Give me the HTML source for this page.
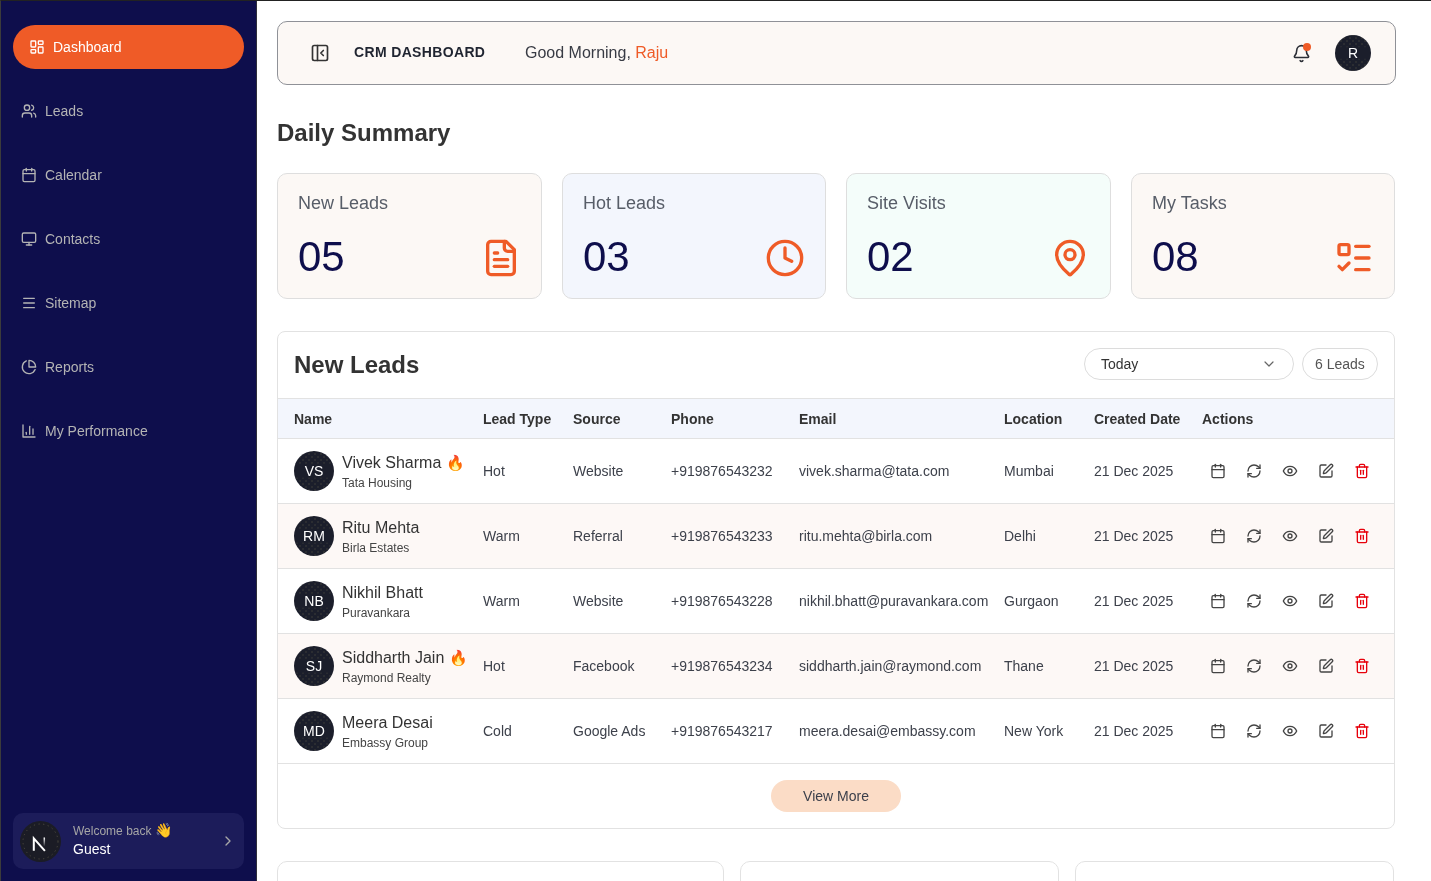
<!DOCTYPE html>
<html><head><meta charset="utf-8">
<style>
*{box-sizing:border-box;margin:0;padding:0}
html,body{width:1431px;height:881px;overflow:hidden;background:#fff}
body{font-family:"Liberation Sans",sans-serif;-webkit-font-smoothing:antialiased;position:relative;border-top:1px solid #222;border-left:1px solid #3b3b3b}
svg.i{fill:none;stroke:currentColor;stroke-width:2;stroke-linecap:round;stroke-linejoin:round;display:block}
.abs{position:absolute}
#side{position:absolute;will-change:transform;left:0;top:0;width:256px;height:880px;background:#0e0e4c;border-right:1px solid #2e2e3a}
.pill{position:absolute;left:12px;top:24px;width:231px;height:44px;border-radius:22px;background:#ef5b27;color:#fff}
.pill svg{position:absolute;left:16px;top:14px}
.pill span{position:absolute;left:40px;top:14px;font-size:14px;line-height:16px}
.nav{position:absolute;left:20px;color:#b4b4b4;font-size:14px;line-height:16px}
.nav svg{position:absolute;left:0;top:0}
.nav span{position:absolute;left:24px;top:0;white-space:nowrap}
#main{position:absolute;will-change:transform;left:255px;top:0;width:1174px;height:880px}
#hdr{position:absolute;left:21px;top:20px;width:1119px;height:64px;border:1px solid #8f9197;border-radius:10px;background:#fcf8f5}
.av{position:absolute;border-radius:50%;background-color:#1b1e2b;background-image:linear-gradient(to bottom,rgba(27,30,43,0) 30%,#1b1e2b 36%,#1b1e2b 64%,rgba(27,30,43,0) 70%),radial-gradient(circle,rgba(150,140,95,.28) 0 0.5px,rgba(0,0,0,0) 0.9px),radial-gradient(circle,rgba(150,140,95,.28) 0 0.5px,rgba(0,0,0,0) 0.9px);background-size:100% 100%,6px 6px,6px 6px;background-position:0 0,0 0,3px 3px;color:#fff;display:flex;align-items:center;justify-content:center}
.card{position:absolute;top:172px;height:126px;border:1px solid #dedede;border-radius:10px}
.lbl{position:absolute;left:20px;top:19px;font-size:18px;line-height:20px;color:#575d68}
.num{position:absolute;left:20px;top:60px;font-size:42px;line-height:46px;color:#0e0e4c}
.ci{position:absolute;right:20px;top:64px;color:#ef5b27}
#tbl{position:absolute;left:21px;top:330px;width:1118px;height:498px;border:1px solid #e2e2e2;border-radius:8px;background:#fff;overflow:hidden}
.bc{position:absolute;top:860px;height:40px;border:1px solid #e2e2e2;border-radius:10px}
.dd{position:absolute;height:32px;border:1px solid #dcdcdc;border-radius:16px;background:#fff}
.dd span{position:absolute;top:7px;font-size:14px;line-height:16px;color:#333;white-space:nowrap}
.th{position:absolute;left:0;width:100%;height:41px;background:#f3f6fd;border-top:1px solid #e2e2e2;border-bottom:1px solid #e2e2e2}
.hc{position:absolute;font-size:14px;line-height:16px;font-weight:bold;color:#333;white-space:nowrap}
.tr{position:absolute;left:0;width:100%;height:65px;border-bottom:1px solid #e2e2e2}
.av.sm{width:40px;height:40px;font-size:14px}
.nm{position:absolute;font-size:16px;line-height:20px;color:#333;white-space:nowrap}
.emo{font-size:15px}
.co{position:absolute;font-size:12px;line-height:14px;color:#444;white-space:nowrap}
.td{position:absolute;font-size:14px;line-height:18px;color:#3d414b;white-space:nowrap}
.vm{position:absolute;width:130px;height:32px;border-radius:16px;background:#fbdcc6;color:#3b3f4a;font-size:14px;line-height:32px;text-align:center}
#uc{position:absolute;left:12px;top:812px;width:231px;height:56px;border-radius:10px;background:#1c1c5a}
</style></head><body>
<div id="side">
  <div class="pill">
    <svg class="i" width="16" height="16" viewBox="0 0 24 24"><rect width="7" height="9" x="3" y="3" rx="1"/><rect width="7" height="5" x="14" y="3" rx="1"/><rect width="7" height="9" x="14" y="12" rx="1"/><rect width="7" height="5" x="3" y="16" rx="1"/></svg>
    <span>Dashboard</span>
  </div>
  <div class="nav" style="top:102px"><svg class="i" width="16" height="16" viewBox="0 0 24 24"><path d="M16 21v-2a4 4 0 0 0-4-4H6a4 4 0 0 0-4 4v2"/><circle cx="9" cy="7" r="4"/><path d="M22 21v-2a4 4 0 0 0-3-3.87"/><path d="M16 3.13a4 4 0 0 1 0 7.75"/></svg><span>Leads</span></div>
  <div class="nav" style="top:166px"><svg class="i" width="16" height="16" viewBox="0 0 24 24"><path d="M8 2v4"/><path d="M16 2v4"/><rect width="18" height="18" x="3" y="4" rx="2"/><path d="M3 10h18"/></svg><span>Calendar</span></div>
  <div class="nav" style="top:230px"><svg class="i" width="16" height="16" viewBox="0 0 24 24"><rect width="20" height="14" x="2" y="3" rx="2"/><line x1="8" x2="16" y1="21" y2="21"/><line x1="12" x2="12" y1="17" y2="21"/></svg><span>Contacts</span></div>
  <div class="nav" style="top:294px"><svg class="i" width="16" height="16" viewBox="0 0 24 24"><path d="M4 5h16"/><path d="M4 12h16"/><path d="M4 19h16"/></svg><span>Sitemap</span></div>
  <div class="nav" style="top:358px"><svg class="i" width="16" height="16" viewBox="0 0 24 24"><path d="M21.21 15.89A10 10 0 1 1 8 2.83"/><path d="M22 12A10 10 0 0 0 12 2v10z"/></svg><span>Reports</span></div>
  <div class="nav" style="top:422px"><svg class="i" width="16" height="16" viewBox="0 0 24 24"><path d="M3 3v18h18"/><path d="M18 17V9"/><path d="M13 17V5"/><path d="M8 17v-3"/></svg><span>My Performance</span></div>
  <div id="uc">
    <svg style="position:absolute;left:7px;top:8px" width="41" height="41" viewBox="0 0 41 41"><defs><linearGradient id="ng" gradientUnits="userSpaceOnUse" x1="0" y1="16.5" x2="0" y2="25.5"><stop offset="0" stop-color="#fff"/><stop offset="1" stop-color="#fff" stop-opacity="0"/></linearGradient></defs><circle cx="20.5" cy="20.5" r="20.5" fill="#1b1c25"/><circle cx="20.5" cy="20.5" r="17.5" fill="none" stroke="#6b6650" stroke-width="0.6" stroke-dasharray="1.2 3.5"/><path d="M13.8 29.8V17.4L24.9 29.8" stroke="#fff" stroke-width="2" fill="none" stroke-linejoin="miter"/><path d="M24.3 16.5V25.5" stroke="url(#ng)" stroke-width="1.5"/></svg>
    <div class="abs" style="left:60px;top:10px;font-size:12px;line-height:14px;color:#a6a6a6;white-space:nowrap">Welcome back <span style="font-size:14px;line-height:14px">👋</span></div>
    <div class="abs" style="left:60px;top:28px;font-size:14px;line-height:17px;color:#fff">Guest</div>
    <svg class="i" style="position:absolute;left:207px;top:20px;color:#a8a8a8" width="16" height="16" viewBox="0 0 24 24"><path d="m9 18 6-6-6-6"/></svg>
  </div>
</div>
<div id="main">
  <div id="hdr">
    <svg class="i" style="position:absolute;left:32px;top:20.5px;color:#333" width="20" height="20" viewBox="0 0 24 24"><rect width="18" height="18" x="3" y="3" rx="2"/><path d="M9 3v18"/><path d="m16 15-3-3 3-3"/></svg>
    <div class="abs" style="left:76px;top:22px;font-size:14px;line-height:16px;font-weight:bold;letter-spacing:0.35px;color:#1f2430">CRM DASHBOARD</div>
    <div class="abs" style="left:247px;top:21px;font-size:16px;line-height:20px;color:#383b44">Good Morning, <span style="color:#ef5b27">Raju</span></div>
    <svg class="i" style="position:absolute;left:1013.5px;top:21.8px;color:#2b2e36" width="19" height="19" viewBox="0 0 24 24"><path d="M10.268 21a2 2 0 0 0 3.464 0"/><path d="M3.262 15.326A1 1 0 0 0 4 17h16a1 1 0 0 0 .74-1.673C19.41 13.956 18 12.499 18 8A6 6 0 0 0 6 8c0 4.499-1.411 5.956-2.738 7.326"/></svg>
    <div class="abs" style="left:1025px;top:21px;width:8px;height:8px;border-radius:50%;background:#ef5b27"></div>
    <div class="av" style="left:1057px;top:13px;width:36px;height:36px;font-size:14px">R</div>
  </div>
  <div class="abs" style="left:21px;top:118px;font-size:24px;line-height:28px;font-weight:bold;color:#333">Daily Summary</div>
  <div class="card" style="left:21px;width:265px;background:#fcf8f5">
    <div class="lbl">New Leads</div><div class="num">05</div>
    <svg class="i ci" width="40" height="40" viewBox="0 0 24 24"><path d="M15 2H6a2 2 0 0 0-2 2v16a2 2 0 0 0 2 2h12a2 2 0 0 0 2-2V7Z"/><path d="M14 2v4a2 2 0 0 0 2 2h4"/><path d="M10 9H8"/><path d="M16 13H8"/><path d="M16 17H8"/></svg>
  </div>
  <div class="card" style="left:306px;width:264px;background:#f3f6fd">
    <div class="lbl">Hot Leads</div><div class="num">03</div>
    <svg class="i ci" width="40" height="40" viewBox="0 0 24 24"><circle cx="12" cy="12" r="10"/><polyline points="12 6 12 12 16 14"/></svg>
  </div>
  <div class="card" style="left:590px;width:265px;background:#f4fdfa">
    <div class="lbl">Site Visits</div><div class="num">02</div>
    <svg class="i ci" width="40" height="40" viewBox="0 0 24 24"><path d="M20 10c0 4.993-5.539 10.193-7.399 11.799a1 1 0 0 1-1.202 0C9.539 20.193 4 14.993 4 10a8 8 0 0 1 16 0"/><circle cx="12" cy="10" r="3"/></svg>
  </div>
  <div class="card" style="left:875px;width:264px;background:#fcf8f5">
    <div class="lbl">My Tasks</div><div class="num">08</div>
    <svg class="i ci" width="40" height="40" viewBox="0 0 24 24"><rect x="3" y="4" width="6" height="6" rx="1"/><path d="m3 17 2 2 4-4"/><path d="M13 5h8"/><path d="M13 12h8"/><path d="M13 19h8"/></svg>
  </div>
  <div id="tbl">
<div class="abs" style="left:16px;top:19px;font-size:24px;line-height:28px;font-weight:bold;color:#333">New Leads</div>
<div class="dd" style="left:806px;top:16px;width:210px"><span style="left:16px">Today</span><svg class="i" style="position:absolute;left:176px;top:7px;color:#666;stroke-width:1.8" width="16" height="16" viewBox="0 0 24 24"><path d="m6 9 6 6 6-6"/></svg></div>
<div class="dd" style="left:1024px;top:16px;width:76px"><span style="left:12px;color:#555">6 Leads</span></div>
<div class="th" style="top:66px"></div>
<div class="hc" style="left:16px;top:79px">Name</div>
<div class="hc" style="left:205px;top:79px">Lead Type</div>
<div class="hc" style="left:295px;top:79px">Source</div>
<div class="hc" style="left:393px;top:79px">Phone</div>
<div class="hc" style="left:521px;top:79px">Email</div>
<div class="hc" style="left:726px;top:79px">Location</div>
<div class="hc" style="left:816px;top:79px">Created Date</div>
<div class="hc" style="left:924px;top:79px">Actions</div>
<div class="tr" style="top:107px;background:#fff"></div>
<div class="av sm" style="left:16px;top:119px">VS</div>
<div class="nm" style="left:64px;top:121px">Vivek Sharma <span class="emo">🔥</span></div>
<div class="co" style="left:64px;top:144px">Tata Housing</div>
<div class="td" style="left:205px;top:130px">Hot</div>
<div class="td" style="left:295px;top:130px">Website</div>
<div class="td" style="left:393px;top:130px">+919876543232</div>
<div class="td" style="left:521px;top:130px">vivek.sharma@tata.com</div>
<div class="td" style="left:726px;top:130px">Mumbai</div>
<div class="td" style="left:816px;top:130px">21 Dec 2025</div>
<svg class="i" style="position:absolute;left:932px;top:131px;color:#444" width="16" height="16" viewBox="0 0 24 24"><path d="M8 2v4"/><path d="M16 2v4"/><rect width="18" height="18" x="3" y="4" rx="2"/><path d="M3 10h18"/></svg>
<svg class="i" style="position:absolute;left:968px;top:131px;color:#444" width="16" height="16" viewBox="0 0 24 24"><path d="M3 12a9 9 0 0 1 9-9 9.75 9.75 0 0 1 6.74 2.74L21 8"/><path d="M21 3v5h-5"/><path d="M21 12a9 9 0 0 1-9 9 9.75 9.75 0 0 1-6.74-2.74L3 16"/><path d="M8 16H3v5"/></svg>
<svg class="i" style="position:absolute;left:1004px;top:131px;color:#444" width="16" height="16" viewBox="0 0 24 24"><path d="M2 12s3-7 10-7 10 7 10 7-3 7-10 7-10-7-10-7Z"/><circle cx="12" cy="12" r="3"/></svg>
<svg class="i" style="position:absolute;left:1040px;top:131px;color:#444" width="16" height="16" viewBox="0 0 24 24"><path d="M12 3H5a2 2 0 0 0-2 2v14a2 2 0 0 0 2 2h14a2 2 0 0 0 2-2v-7"/><path d="M18.375 2.625a1 1 0 0 1 3 3l-9.013 9.014a2 2 0 0 1-.853.505l-2.873.84a.5.5 0 0 1-.62-.62l.84-2.873a2 2 0 0 1 .506-.852z"/></svg>
<svg class="i" style="position:absolute;left:1076px;top:131px;color:#e7000b" width="16" height="16" viewBox="0 0 24 24"><path d="M3 6h18"/><path d="M19 6v14c0 1-1 2-2 2H7c-1 0-2-1-2-2V6"/><path d="M8 6V4c0-1 1-2 2-2h4c1 0 2 1 2 2v2"/><line x1="10" x2="10" y1="11" y2="17"/><line x1="14" x2="14" y1="11" y2="17"/></svg>
<div class="tr" style="top:172px;background:#fdf8f6"></div>
<div class="av sm" style="left:16px;top:184px">RM</div>
<div class="nm" style="left:64px;top:186px">Ritu Mehta</div>
<div class="co" style="left:64px;top:209px">Birla Estates</div>
<div class="td" style="left:205px;top:195px">Warm</div>
<div class="td" style="left:295px;top:195px">Referral</div>
<div class="td" style="left:393px;top:195px">+919876543233</div>
<div class="td" style="left:521px;top:195px">ritu.mehta@birla.com</div>
<div class="td" style="left:726px;top:195px">Delhi</div>
<div class="td" style="left:816px;top:195px">21 Dec 2025</div>
<svg class="i" style="position:absolute;left:932px;top:196px;color:#444" width="16" height="16" viewBox="0 0 24 24"><path d="M8 2v4"/><path d="M16 2v4"/><rect width="18" height="18" x="3" y="4" rx="2"/><path d="M3 10h18"/></svg>
<svg class="i" style="position:absolute;left:968px;top:196px;color:#444" width="16" height="16" viewBox="0 0 24 24"><path d="M3 12a9 9 0 0 1 9-9 9.75 9.75 0 0 1 6.74 2.74L21 8"/><path d="M21 3v5h-5"/><path d="M21 12a9 9 0 0 1-9 9 9.75 9.75 0 0 1-6.74-2.74L3 16"/><path d="M8 16H3v5"/></svg>
<svg class="i" style="position:absolute;left:1004px;top:196px;color:#444" width="16" height="16" viewBox="0 0 24 24"><path d="M2 12s3-7 10-7 10 7 10 7-3 7-10 7-10-7-10-7Z"/><circle cx="12" cy="12" r="3"/></svg>
<svg class="i" style="position:absolute;left:1040px;top:196px;color:#444" width="16" height="16" viewBox="0 0 24 24"><path d="M12 3H5a2 2 0 0 0-2 2v14a2 2 0 0 0 2 2h14a2 2 0 0 0 2-2v-7"/><path d="M18.375 2.625a1 1 0 0 1 3 3l-9.013 9.014a2 2 0 0 1-.853.505l-2.873.84a.5.5 0 0 1-.62-.62l.84-2.873a2 2 0 0 1 .506-.852z"/></svg>
<svg class="i" style="position:absolute;left:1076px;top:196px;color:#e7000b" width="16" height="16" viewBox="0 0 24 24"><path d="M3 6h18"/><path d="M19 6v14c0 1-1 2-2 2H7c-1 0-2-1-2-2V6"/><path d="M8 6V4c0-1 1-2 2-2h4c1 0 2 1 2 2v2"/><line x1="10" x2="10" y1="11" y2="17"/><line x1="14" x2="14" y1="11" y2="17"/></svg>
<div class="tr" style="top:237px;background:#fff"></div>
<div class="av sm" style="left:16px;top:249px">NB</div>
<div class="nm" style="left:64px;top:251px">Nikhil Bhatt</div>
<div class="co" style="left:64px;top:274px">Puravankara</div>
<div class="td" style="left:205px;top:260px">Warm</div>
<div class="td" style="left:295px;top:260px">Website</div>
<div class="td" style="left:393px;top:260px">+919876543228</div>
<div class="td" style="left:521px;top:260px">nikhil.bhatt@puravankara.com</div>
<div class="td" style="left:726px;top:260px">Gurgaon</div>
<div class="td" style="left:816px;top:260px">21 Dec 2025</div>
<svg class="i" style="position:absolute;left:932px;top:261px;color:#444" width="16" height="16" viewBox="0 0 24 24"><path d="M8 2v4"/><path d="M16 2v4"/><rect width="18" height="18" x="3" y="4" rx="2"/><path d="M3 10h18"/></svg>
<svg class="i" style="position:absolute;left:968px;top:261px;color:#444" width="16" height="16" viewBox="0 0 24 24"><path d="M3 12a9 9 0 0 1 9-9 9.75 9.75 0 0 1 6.74 2.74L21 8"/><path d="M21 3v5h-5"/><path d="M21 12a9 9 0 0 1-9 9 9.75 9.75 0 0 1-6.74-2.74L3 16"/><path d="M8 16H3v5"/></svg>
<svg class="i" style="position:absolute;left:1004px;top:261px;color:#444" width="16" height="16" viewBox="0 0 24 24"><path d="M2 12s3-7 10-7 10 7 10 7-3 7-10 7-10-7-10-7Z"/><circle cx="12" cy="12" r="3"/></svg>
<svg class="i" style="position:absolute;left:1040px;top:261px;color:#444" width="16" height="16" viewBox="0 0 24 24"><path d="M12 3H5a2 2 0 0 0-2 2v14a2 2 0 0 0 2 2h14a2 2 0 0 0 2-2v-7"/><path d="M18.375 2.625a1 1 0 0 1 3 3l-9.013 9.014a2 2 0 0 1-.853.505l-2.873.84a.5.5 0 0 1-.62-.62l.84-2.873a2 2 0 0 1 .506-.852z"/></svg>
<svg class="i" style="position:absolute;left:1076px;top:261px;color:#e7000b" width="16" height="16" viewBox="0 0 24 24"><path d="M3 6h18"/><path d="M19 6v14c0 1-1 2-2 2H7c-1 0-2-1-2-2V6"/><path d="M8 6V4c0-1 1-2 2-2h4c1 0 2 1 2 2v2"/><line x1="10" x2="10" y1="11" y2="17"/><line x1="14" x2="14" y1="11" y2="17"/></svg>
<div class="tr" style="top:302px;background:#fdf8f6"></div>
<div class="av sm" style="left:16px;top:314px">SJ</div>
<div class="nm" style="left:64px;top:316px">Siddharth Jain <span class="emo">🔥</span></div>
<div class="co" style="left:64px;top:339px">Raymond Realty</div>
<div class="td" style="left:205px;top:325px">Hot</div>
<div class="td" style="left:295px;top:325px">Facebook</div>
<div class="td" style="left:393px;top:325px">+919876543234</div>
<div class="td" style="left:521px;top:325px">siddharth.jain@raymond.com</div>
<div class="td" style="left:726px;top:325px">Thane</div>
<div class="td" style="left:816px;top:325px">21 Dec 2025</div>
<svg class="i" style="position:absolute;left:932px;top:326px;color:#444" width="16" height="16" viewBox="0 0 24 24"><path d="M8 2v4"/><path d="M16 2v4"/><rect width="18" height="18" x="3" y="4" rx="2"/><path d="M3 10h18"/></svg>
<svg class="i" style="position:absolute;left:968px;top:326px;color:#444" width="16" height="16" viewBox="0 0 24 24"><path d="M3 12a9 9 0 0 1 9-9 9.75 9.75 0 0 1 6.74 2.74L21 8"/><path d="M21 3v5h-5"/><path d="M21 12a9 9 0 0 1-9 9 9.75 9.75 0 0 1-6.74-2.74L3 16"/><path d="M8 16H3v5"/></svg>
<svg class="i" style="position:absolute;left:1004px;top:326px;color:#444" width="16" height="16" viewBox="0 0 24 24"><path d="M2 12s3-7 10-7 10 7 10 7-3 7-10 7-10-7-10-7Z"/><circle cx="12" cy="12" r="3"/></svg>
<svg class="i" style="position:absolute;left:1040px;top:326px;color:#444" width="16" height="16" viewBox="0 0 24 24"><path d="M12 3H5a2 2 0 0 0-2 2v14a2 2 0 0 0 2 2h14a2 2 0 0 0 2-2v-7"/><path d="M18.375 2.625a1 1 0 0 1 3 3l-9.013 9.014a2 2 0 0 1-.853.505l-2.873.84a.5.5 0 0 1-.62-.62l.84-2.873a2 2 0 0 1 .506-.852z"/></svg>
<svg class="i" style="position:absolute;left:1076px;top:326px;color:#e7000b" width="16" height="16" viewBox="0 0 24 24"><path d="M3 6h18"/><path d="M19 6v14c0 1-1 2-2 2H7c-1 0-2-1-2-2V6"/><path d="M8 6V4c0-1 1-2 2-2h4c1 0 2 1 2 2v2"/><line x1="10" x2="10" y1="11" y2="17"/><line x1="14" x2="14" y1="11" y2="17"/></svg>
<div class="tr" style="top:367px;background:#fff"></div>
<div class="av sm" style="left:16px;top:379px">MD</div>
<div class="nm" style="left:64px;top:381px">Meera Desai</div>
<div class="co" style="left:64px;top:404px">Embassy Group</div>
<div class="td" style="left:205px;top:390px">Cold</div>
<div class="td" style="left:295px;top:390px">Google Ads</div>
<div class="td" style="left:393px;top:390px">+919876543217</div>
<div class="td" style="left:521px;top:390px">meera.desai@embassy.com</div>
<div class="td" style="left:726px;top:390px">New York</div>
<div class="td" style="left:816px;top:390px">21 Dec 2025</div>
<svg class="i" style="position:absolute;left:932px;top:391px;color:#444" width="16" height="16" viewBox="0 0 24 24"><path d="M8 2v4"/><path d="M16 2v4"/><rect width="18" height="18" x="3" y="4" rx="2"/><path d="M3 10h18"/></svg>
<svg class="i" style="position:absolute;left:968px;top:391px;color:#444" width="16" height="16" viewBox="0 0 24 24"><path d="M3 12a9 9 0 0 1 9-9 9.75 9.75 0 0 1 6.74 2.74L21 8"/><path d="M21 3v5h-5"/><path d="M21 12a9 9 0 0 1-9 9 9.75 9.75 0 0 1-6.74-2.74L3 16"/><path d="M8 16H3v5"/></svg>
<svg class="i" style="position:absolute;left:1004px;top:391px;color:#444" width="16" height="16" viewBox="0 0 24 24"><path d="M2 12s3-7 10-7 10 7 10 7-3 7-10 7-10-7-10-7Z"/><circle cx="12" cy="12" r="3"/></svg>
<svg class="i" style="position:absolute;left:1040px;top:391px;color:#444" width="16" height="16" viewBox="0 0 24 24"><path d="M12 3H5a2 2 0 0 0-2 2v14a2 2 0 0 0 2 2h14a2 2 0 0 0 2-2v-7"/><path d="M18.375 2.625a1 1 0 0 1 3 3l-9.013 9.014a2 2 0 0 1-.853.505l-2.873.84a.5.5 0 0 1-.62-.62l.84-2.873a2 2 0 0 1 .506-.852z"/></svg>
<svg class="i" style="position:absolute;left:1076px;top:391px;color:#e7000b" width="16" height="16" viewBox="0 0 24 24"><path d="M3 6h18"/><path d="M19 6v14c0 1-1 2-2 2H7c-1 0-2-1-2-2V6"/><path d="M8 6V4c0-1 1-2 2-2h4c1 0 2 1 2 2v2"/><line x1="10" x2="10" y1="11" y2="17"/><line x1="14" x2="14" y1="11" y2="17"/></svg>
<div class="vm" style="left:493px;top:448px">View More</div>
</div>
  <div class="bc" style="left:21px;width:447px"></div>
  <div class="bc" style="left:484px;width:319px"></div>
  <div class="bc" style="left:819px;width:319px"></div>
</div>
</body></html>
